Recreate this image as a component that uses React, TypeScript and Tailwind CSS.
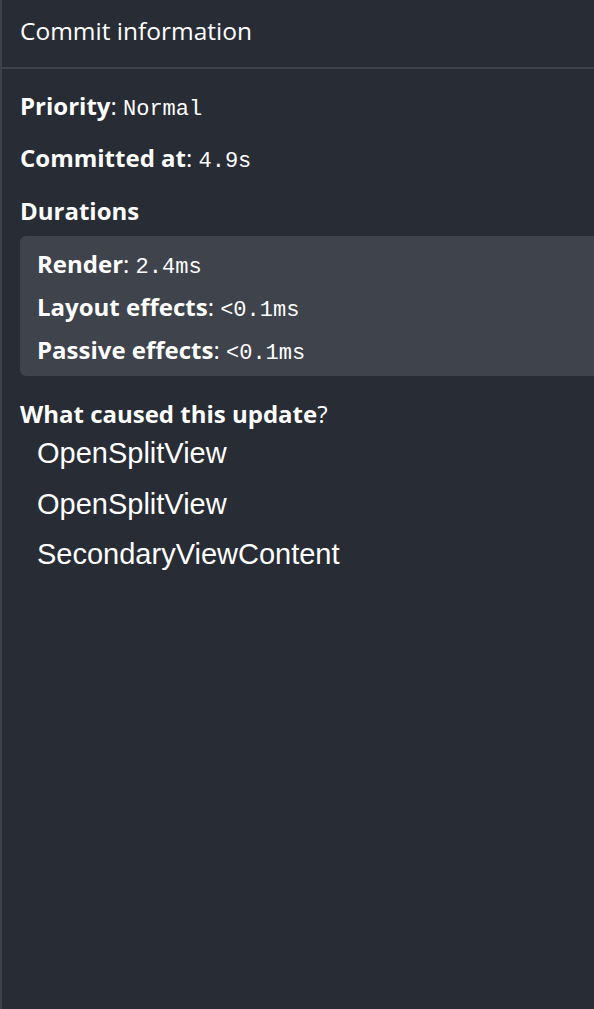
const mono = "font-['Liberation_Mono',monospace] font-normal text-[22px]";

const Row = ({ label, value }: { label: string; value: string }) => (
  <div className="flex h-[30px] items-baseline leading-[30px]">
    <span className="font-bold">{label}</span>
    <span>:&nbsp;</span>
    <span className={mono}>{value}</span>
  </div>
);

const App = () => {
  const causes = ["OpenSplitView", "OpenSplitView", "SecondaryViewContent"];

  return (
    <div className="flex h-[1009px] w-[594px] flex-col overflow-hidden border-l-2 border-[#3d424a] bg-[#282c34] font-['Open_Sans',sans-serif] text-white">
      <div className="flex h-[69px] shrink-0 items-center border-b-2 border-[#3d424a] px-[18px] pb-[4px] text-[24.5px]">
        Commit information
      </div>
      <div className="flex flex-col pl-[18px] text-[24px]">
        <div className="mt-[22px]">
          <Row label="Priority" value="Normal" />
        </div>
        <div className="mt-[22px]">
          <Row label="Committed at" value="4.9s" />
        </div>
        <div className="mt-[23px] h-[30px] font-bold leading-[30px]">Durations</div>
        <div className="mt-[10px] -mr-4 flex flex-col gap-[13px] rounded-l-md bg-[#3e434c] pb-[11px] pl-[17px] pt-[13px]">
          <Row label="Render" value="2.4ms" />
          <Row label="Layout effects" value="<0.1ms" />
          <Row label="Passive effects" value="<0.1ms" />
        </div>
        <div className="mt-[23px] h-[30px] leading-[30px]">
          <span className="font-bold">What caused this update</span>?
        </div>
        <div className="mt-[9px] flex flex-col gap-[20.5px] pl-[17px] font-['Liberation_Sans',sans-serif] text-[29px] leading-[30px]">
          {causes.map((c, i) => (
            <div key={i} className="h-[30px]">
              {c}
            </div>
          ))}
        </div>
      </div>
    </div>
  );
};

export default App;
